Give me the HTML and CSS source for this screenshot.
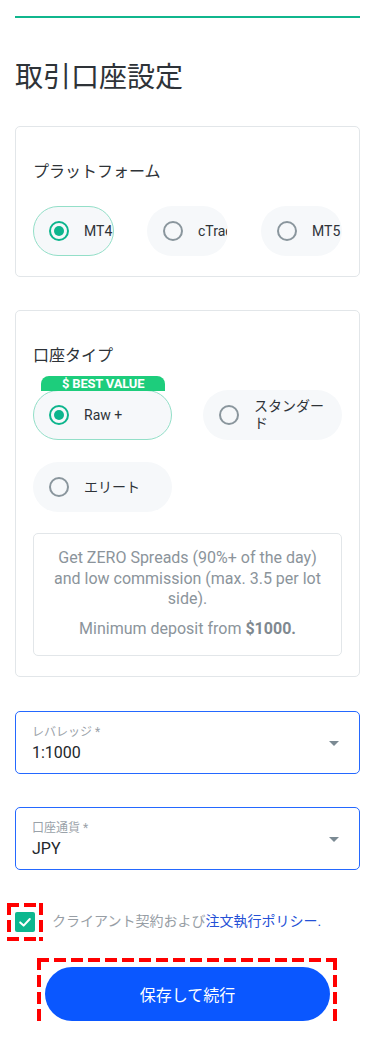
FILE: index.html
```html
<!DOCTYPE html>
<html lang="ja">
<head>
<meta charset="utf-8">
<title>取引口座設定</title>
<link rel="stylesheet" href="styles.css">
</head>
<body>
<main class="page">
  <div class="progress"></div>
  <h1 class="title">取引口座設定</h1>

  <section class="card">
    <div class="card-label">プラットフォーム</div>
    <div class="options options-3">
      <label class="pill selected"><span class="radio"></span><span class="pill-text">MT4</span></label>
      <label class="pill"><span class="radio"></span><span class="pill-text">cTrader</span></label>
      <label class="pill"><span class="radio"></span><span class="pill-text">MT5</span></label>
    </div>
  </section>

  <section class="card card-type">
    <div class="card-label">口座タイプ</div>
    <div class="options options-2">
      <label class="pill selected"><span class="badge">$ BEST VALUE</span><span class="radio"></span><span class="pill-text">Raw +</span></label>
      <label class="pill"><span class="radio"></span><span class="pill-text">スタンダード</span></label>
      <label class="pill"><span class="radio"></span><span class="pill-text">エリート</span></label>
    </div>
    <div class="info">
      <p>Get ZERO Spreads (90%+ of the day) and low commission (max. 3.5 per lot side).</p>
      <p class="deposit">Minimum deposit from <strong>$1000.</strong></p>
    </div>
  </section>

  <div class="select first">
    <div class="select-body">
      <div class="select-label">レバレッジ *</div>
      <div class="select-value">1:1000</div>
    </div>
    <span class="caret"></span>
  </div>

  <div class="select">
    <div class="select-body">
      <div class="select-label">口座通貨 *</div>
      <div class="select-value">JPY</div>
    </div>
    <span class="caret"></span>
  </div>

  <div class="agree">
    <span class="checkbox marked">
      <svg width="20" height="20" viewBox="0 0 20 20"><path d="M5.2 10.4 L8.6 13.6 L14.8 7" fill="none" stroke="#fff" stroke-width="2" stroke-linecap="round" stroke-linejoin="round"/></svg>
    </span>
    <span class="agree-text">クライアント契約および<a class="link" href="#">注文執行ポリシー.</a></span>
  </div>

  <div class="actions">
    <button class="submit marked-btn" type="button">保存して続行</button>
  </div>
</main>
</body>
</html>
```

FILE: styles.css
```css
* {
  box-sizing: border-box;
}

html, body {
  margin: 0;
  padding: 0;
  background: #ffffff;
}

body {
  font-family: Roboto, "Noto Sans CJK JP", sans-serif;
  color: #2e3338;
}

.page {
  padding: 16px 15px 0;
}

.progress {
  height: 2px;
  background: #10b68d;
}

.title {
  margin: 40px 0 0;
  font-size: 28px;
  line-height: 40px;
  font-weight: 400;
  color: #2e3338;
}

.card {
  margin-top: 28px;
  border: 1px solid #e2e6e9;
  border-radius: 5px;
  padding: 33px 17px 20px;
}

.card-type {
  margin-top: 33px;
}

.card-label {
  font-size: 16px;
  line-height: 24px;
  color: #2e3338;
}

.options {
  display: grid;
  margin-top: 22px;
}

.options-3 {
  grid-template-columns: repeat(3, 1fr);
  column-gap: 33px;
}

.options-2 {
  grid-template-columns: repeat(2, 1fr);
  column-gap: 31px;
  row-gap: 22px;
}

.pill {
  position: relative;
  display: flex;
  align-items: center;
  gap: 15px;
  height: 50px;
  padding-left: 15px;
  border: 1px solid transparent;
  border-radius: 25px;
  background: #f6f8fa;
  min-width: 0;
}

.options-2 .pill {
  padding-right: 14px;
}

.pill.selected {
  border-color: #93dfc8;
}

.radio {
  position: relative;
  flex-shrink: 0;
  width: 20px;
  height: 20px;
  border: 2px solid #8a969d;
  border-radius: 50%;
}

.selected .radio {
  border-color: #0db58d;
}

.selected .radio::after {
  content: "";
  position: absolute;
  left: 3px;
  top: 3px;
  width: 10px;
  height: 10px;
  border-radius: 50%;
  background: #0db58d;
}

.pill-text {
  flex: 1;
  min-width: 0;
  font-size: 14px;
  line-height: 17px;
  color: #2e3338;
  overflow: hidden;
}

.options-3 .pill-text {
  white-space: nowrap;
}

.badge {
  position: absolute;
  left: 7px;
  top: -15px;
  height: 15px;
  padding: 0 21px;
  border-radius: 8px 8px 0 0;
  background: #1dcd7c;
  color: #ffffff;
  font-size: 13px;
  line-height: 15px;
  font-weight: 700;
  letter-spacing: -0.2px;
  white-space: nowrap;
}

.info {
  margin-top: 21px;
  border: 1px solid #e2e6e9;
  border-radius: 5px;
  padding: 14px 16px 16px;
  text-align: center;
  color: #8b949b;
  font-size: 16px;
  line-height: 20.5px;
}

.info p {
  margin: 0;
}

.info .deposit {
  margin-top: 9px;
}

.info strong {
  font-weight: 700;
  color: #7f8990;
}

.select {
  display: flex;
  align-items: center;
  margin-top: 33px;
  height: 63px;
  padding: 11px 20px 9px 16px;
  border: 1px solid #2468ff;
  border-radius: 5px;
}

.select.first {
  margin-top: 34px;
}

.select-body {
  flex: 1;
}

.select-label {
  font-size: 12px;
  line-height: 16px;
  color: #9aa2a9;
}

.select-value {
  margin-top: 2px;
  font-size: 16px;
  line-height: 22px;
  color: #22272b;
}

.caret {
  width: 0;
  height: 0;
  border-left: 5px solid transparent;
  border-right: 5px solid transparent;
  border-top: 5px solid #7b8a93;
}

.agree {
  display: flex;
  align-items: center;
  gap: 17px;
  margin-top: 42px;
}

.checkbox {
  position: relative;
  flex-shrink: 0;
  width: 20px;
  height: 20px;
  border-radius: 2px;
  background: #0db78f;
}

.checkbox svg {
  display: block;
}

.marked::after,
.marked-btn::after {
  content: "";
  position: absolute;
  background:
    linear-gradient(90deg, #ff0000 68%, transparent 0) top left / 17px 4px repeat-x,
    linear-gradient(90deg, #ff0000 68%, transparent 0) bottom left / 17px 4px repeat-x,
    linear-gradient(180deg, #ff0000 68%, transparent 0) top left / 4px 17px repeat-y,
    linear-gradient(180deg, #ff0000 68%, transparent 0) top right / 4px 17px repeat-y;
}

.checkbox.marked::after {
  left: -8px;
  right: -8px;
  top: -9px;
  bottom: -9px;
}

.agree-text {
  font-size: 14px;
  line-height: 20px;
  color: #979ea5;
  margin-top: -3px;
}

.link {
  color: #2450d6;
  text-decoration: none;
}

.actions {
  display: flex;
  justify-content: center;
  margin-top: 35px;
}

.submit {
  position: relative;
  width: 285px;
  height: 54px;
  border: none;
  border-radius: 27px;
  background: #0a57ff;
  color: #ffffff;
  font-family: Roboto, "Noto Sans CJK JP", sans-serif;
  font-size: 16px;
}

.marked-btn::after {
  left: -8px;
  right: -7px;
  top: -9px;
  bottom: -6px;
}
```
